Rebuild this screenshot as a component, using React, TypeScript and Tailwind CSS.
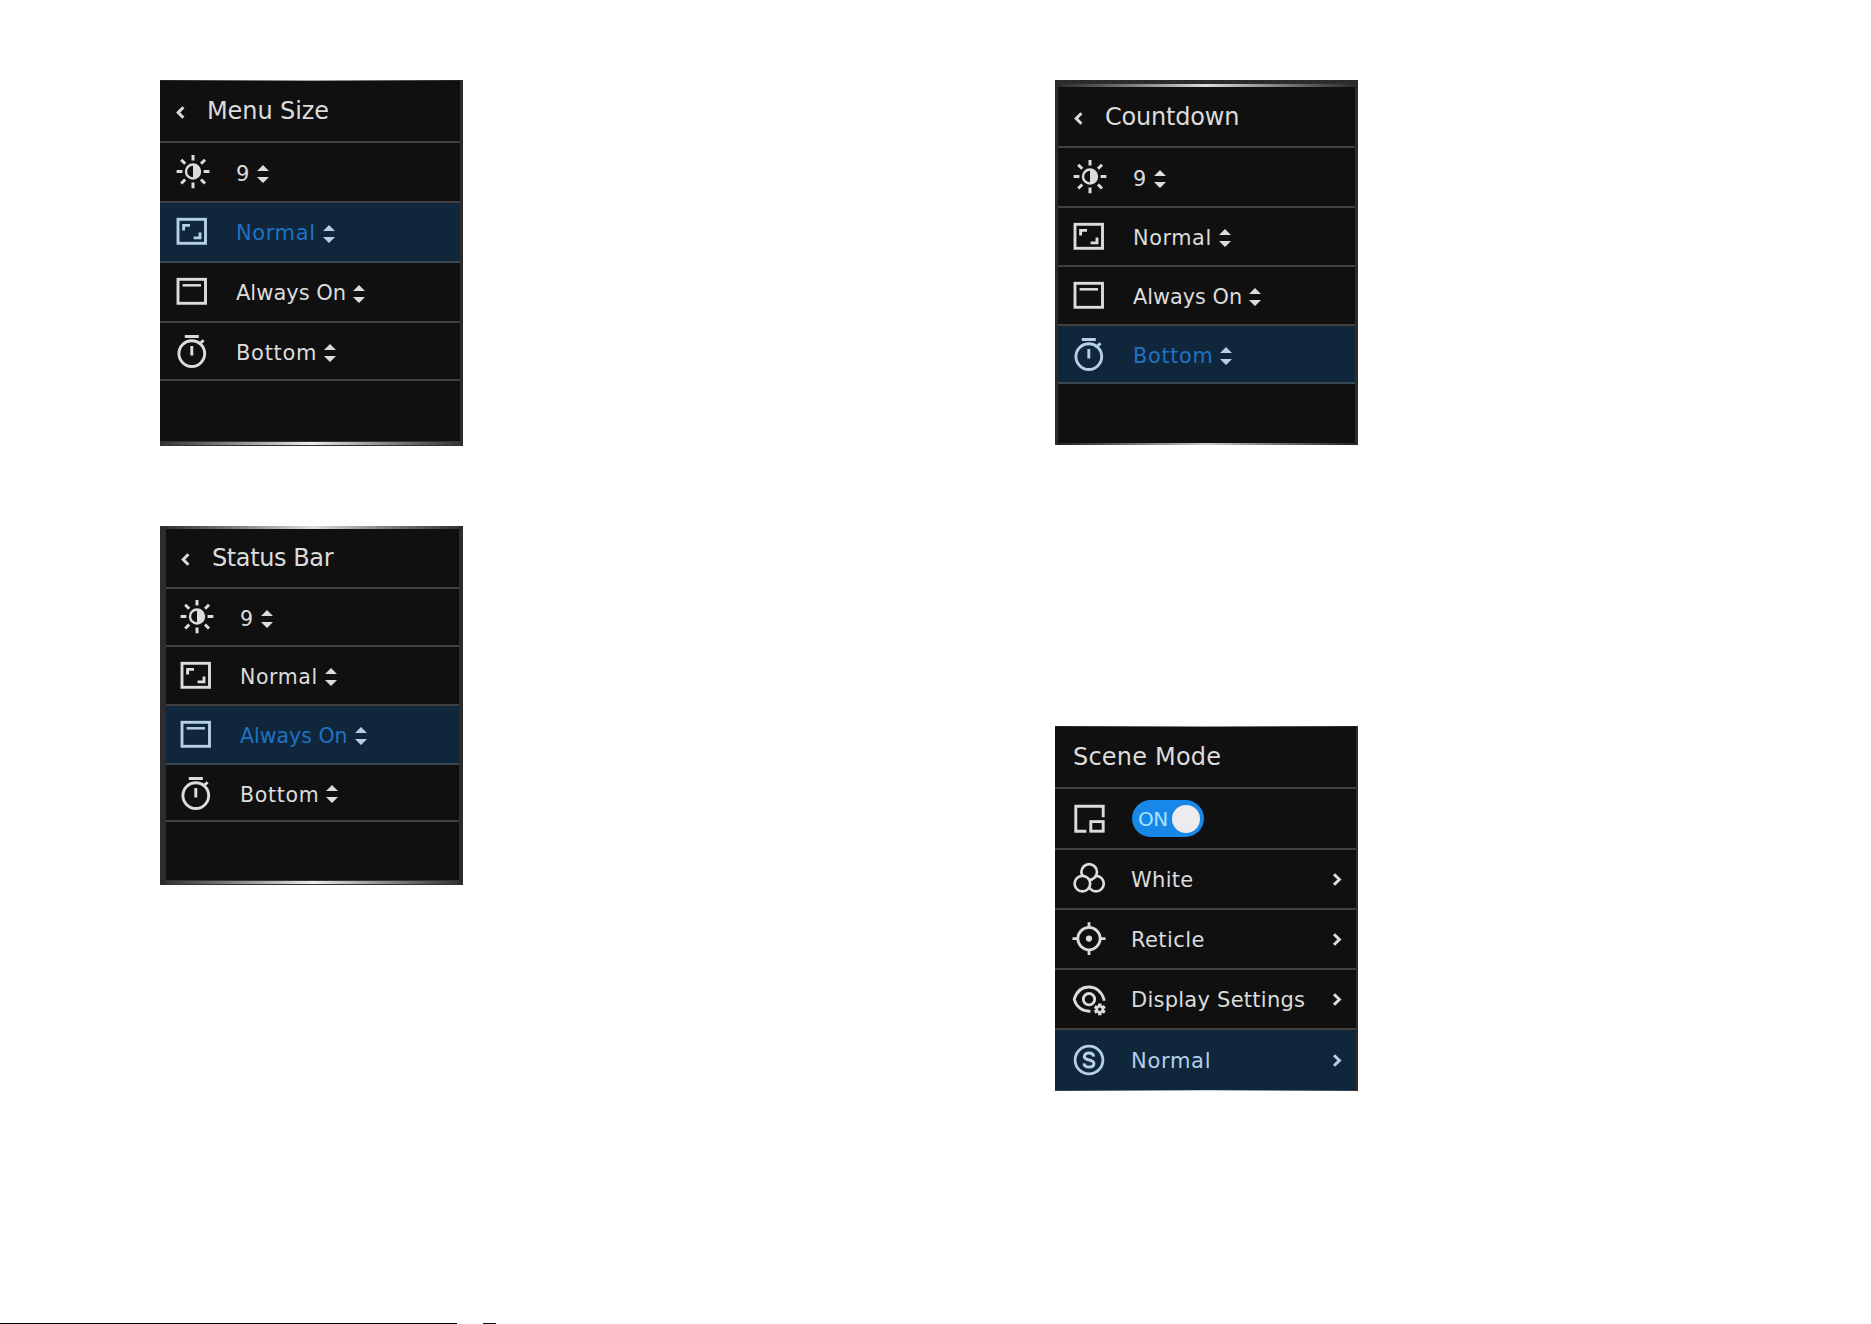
import type { ReactNode } from "react";

const Brightness = () => (
    <svg width="34" height="34" viewBox="0 0 34 34" fill="none" stroke="currentColor" strokeWidth="3">
        <circle cx="17" cy="16.5" r="7" strokeWidth="2.4" />
        <path d="M17 9.5a7 7 0 0 1 0 14z" fill="currentColor" stroke="none" />
        <path d="M17 0v5.6M17 27.6v5.6M.6 16.5h5.8M27.6 16.5h5.8M5.2 4.7l4 4M25 24.5l4 4M5.2 28.5l4-4M25 8.7l4-4" />
    </svg>
);

const MenuSize = () => (
    <svg width="34" height="34" viewBox="0 0 34 34" fill="none" stroke="currentColor" strokeWidth="2.9">
        <rect x="2" y="4.3" width="27.5" height="24" />
        <path d="M7.6 15.6v-5.2h6.4M24 17.5v5.4h-6.4" />
    </svg>
);

const StatusBar = () => (
    <svg width="34" height="34" viewBox="0 0 34 34" fill="none" stroke="currentColor" strokeWidth="2.9">
        <rect x="2" y="4.3" width="27.5" height="24" />
        <path d="M6.6 10.3h18.4" strokeWidth="2.5" />
    </svg>
);

const Countdown = () => (
    <svg width="34" height="34" viewBox="0 0 34 34" fill="none" stroke="currentColor" strokeWidth="2.9">
        <circle cx="15.8" cy="19.6" r="12.9" />
        <path d="M8.8 2.5h14M15.8 12v9.6M23.8 9.8l3.8-3.6" />
    </svg>
);

const Pip = () => (
    <svg width="34" height="34" viewBox="0 0 34 34" fill="none" stroke="currentColor" strokeWidth="2.9">
        <path d="M31.2 15.3V4.2H3.8v25h10.6" />
        <rect x="18.8" y="19.6" width="12.4" height="9.6" />
    </svg>
);

const Palette = () => (
    <svg width="34" height="34" viewBox="0 0 34 34" fill="#101010" stroke="currentColor" strokeWidth="2.7">
        <circle cx="24" cy="21.6" r="7.8" />
        <circle cx="17.2" cy="10" r="7.8" />
        <circle cx="10.4" cy="21.6" r="7.8" />
    </svg>
);

const Reticle = () => (
    <svg width="34" height="34" viewBox="0 0 34 34" fill="none" stroke="currentColor" strokeWidth="2.8">
        <circle cx="17" cy="16.6" r="11.2" />
        <circle cx="17" cy="16.6" r="3.1" fill="currentColor" stroke="none" />
        <path d="M17 .2v6M17 27v6M.5 16.6h6M27.5 16.6h6" />
    </svg>
);

const Display = () => (
    <svg width="34" height="34" viewBox="0 0 34 34" fill="none" stroke="currentColor" strokeWidth="2.8">
        <path d="M18.5 29.2C10 29.8 4.2 24.6 2.2 17.4 4.5 9.6 10 5 17 5s12.7 4.6 15 12.4v1.4" />
        <circle cx="17" cy="17.2" r="5.7" />
        <path d="M27.8 21.4v11.8M22.7 24.4l10.2 5.8M22.7 30.200l10.200-5.800" strokeWidth="3.4" />
        <circle cx="27.8" cy="27.3" r="3" fill="#101010" strokeWidth="2.500" />
    </svg>
);

const Scene = () => (
    <svg width="34" height="34" viewBox="0 0 34 34" fill="none" stroke="currentColor" strokeWidth="2.8">
        <circle cx="17" cy="17" r="13.9" />
        <path d="M21.700 13.600c-.3-2.200-2.100-3.500-4.700-3.500-2.800 0-4.700 1.400-4.700 3.500 0 4.900 9.600 2 9.600 7 0 2.200-2 3.500-4.900 3.500-2.900 0-4.800-1.400-5-3.700" strokeWidth="3" />
    </svg>
);

const UpDown = () => (
    <svg width="12" height="18" viewBox="0 0 12 18" fill="currentColor">
        <path d="M6 0l6 6H0zM0 12h12l-6 6z" />
    </svg>
);

const settings = [
    { icon: <Brightness />, text: "9", label: "pt-[5px] tracking-[0.5px]" },
    { icon: <MenuSize />, text: "Normal", label: "pt-[4px] tracking-[0.6px]" },
    { icon: <StatusBar />, text: "Always On", label: "pt-[4px] tracking-normal" },
    { icon: <Countdown />, text: "Bottom", label: "pt-[6px] tracking-[0.7px]" },
];

const scenes = [
    { icon: <Palette />, text: "White", label: "tracking-[0.3px]" },
    { icon: <Reticle />, text: "Reticle", label: "tracking-[0.4px]" },
    { icon: <Display />, text: "Display Settings", label: "tracking-[0.25px]" },
    { icon: <Scene />, text: "Normal", label: "tracking-[0.7px]" },
];

type MenuProps = {
    title: ReactNode;
    active: number;
    frame: string;
    header: string;
    rows: string[];
    pad: string;
    size: string;
    top: ReactNode;
    bottom: ReactNode;
};

function Menu({ title, active, frame, header, rows, pad, size, top, bottom }: MenuProps) {
    return (
        <div className={`flex flex-col bg-[#101010] border-[#2c2c2c] ${frame}`}>
            {top}
            <div className={`flex shrink-0 items-center border-b-2 border-[#404040] text-2xl ${header}`}>
                <svg className="mt-[3px]" width="9" height="13" viewBox="0 0 9 13" fill="none" stroke="currentColor" strokeWidth="3">
                    <path d="M7.4 1.2L2.2 6.5l5.2 5.3" />
                </svg>
                {title}
            </div>
            {settings.map((row, index) => (
                <div
                    key={row.text}
                    className={`flex shrink-0 items-center border-b-2 ${rows[index]} ${pad} ${index === active ? "bg-[#10263a] border-[#3a4853] text-[#b5cfe8]" : "border-[#404040]"}`}
                >
                    <span className="w-[60px]">{row.icon}</span>
                    <span className={`mr-[7px] ${size} ${row.label} ${index === active ? "text-[#1f72c4]" : ""}`}>{row.text}</span>
                    <span className="pt-[3px]"><UpDown /></span>
                </div>
            ))}
            <div className="grow" />
            {bottom}
        </div>
    );
}

function SceneMenu() {
    return (
        <div className="flex h-[365px] flex-col border-r-2 border-[#2c2c2c] bg-[#101010]">
            <div className="h-px shrink-0 bg-linear-to-r from-[#222] via-[#999] to-[#222]" />
            <div className="flex h-[62px] shrink-0 items-center border-b-2 border-[#404040] pl-[18px] text-2xl tracking-[0.2px]">
                Scene Mode
            </div>
            <div className="flex h-[61px] shrink-0 items-center border-b-2 border-[#404040] pl-[17px]">
                <span className="w-[60px]"><Pip /></span>
                <span className="flex h-[37px] w-[72px] items-center justify-between rounded-full bg-[#1787e8] pr-1 pl-[6px]">
                    <span className="text-[20px] tracking-[-0.5px] text-[#a9e2ff]">ON</span>
                    <span className="size-7 rounded-full bg-[#eeebee]" />
                </span>
            </div>
            {scenes.map((row, index) => (
                <div
                    key={row.text}
                    className={`flex h-[60px] shrink-0 items-center pl-[17px] ${index === 3 ? "bg-[#10263a] text-[#b5cfe8]" : "border-b-2 border-[#404040]"}`}
                >
                    <span className="w-[59px]">{row.icon}</span>
                    <span className={`grow pt-[4px] text-[21px] ${row.label}`}>{row.text}</span>
                    <svg className="mr-[14px]" width="10" height="13" viewBox="0 0 10 13" fill="none" stroke="currentColor" strokeWidth="3">
                        <path d="M2 1.2l5.4 5.3L2 11.8" />
                    </svg>
                </div>
            ))}
            <div className="h-px shrink-0 bg-linear-to-r from-[#2c3a48] via-[#c5d5e5] to-[#2c3a48]" />
        </div>
    );
}

export default function App() {
    return (
        <div className="flex h-[1324px] w-[1871px] flex-col justify-between overflow-hidden bg-white font-['DejaVu_Sans',sans-serif] text-[#dcdcdc]">
            <div className="flex gap-[592px] pt-20 pl-40">
                <div className="flex w-[303px] flex-col gap-20">
                    <Menu
                        title={<span className="ml-[22px] tracking-[-0.1px]">Menu Size</span>}
                        active={1}
                        frame="h-[366px] border-r-3"
                        header="h-[62px] pl-4"
                        rows={["h-[60px]", "h-[60px]", "h-[60px]", "h-[58px]"]}
                        pad="pl-[16px]"
                        size="text-[21px]"
                        top={<div className="h-px shrink-0 bg-linear-to-r from-[#222] via-[#aaa] to-[#222]" />}
                        bottom={<div className="h-[5px] shrink-0 border-y border-[#333] bg-linear-to-r from-[#333] via-[#eee] to-[#333]" />}
                    />
                    <Menu
                        title={<span className="ml-[22px] tracking-[-0.4px]">Status Bar</span>}
                        active={2}
                        frame="h-[359px] border-r-4 border-l-6"
                        header="h-[60px] pl-[15px]"
                        rows={["h-[58px]", "h-[59px]", "h-[59px]", "h-[57px]"]}
                        pad="pl-[14px]"
                        size="text-[20.5px]"
                        top={<div className="h-[3px] shrink-0 bg-linear-to-r from-[#333] via-[#ddd] to-[#333]" />}
                        bottom={<div className="h-[5px] shrink-0 border-y border-[#333] bg-linear-to-r from-[#333] via-[#eee] to-[#333]" />}
                    />
                </div>
                <div className="flex w-[303px] flex-col gap-[281px]">
                    <Menu
                        title={<span className="ml-[22px] tracking-[-0.2px]">Countdown</span>}
                        active={3}
                        frame="h-[365px] border-x-3"
                        header="h-[61px] pl-4"
                        rows={["h-[60px]", "h-[59px]", "h-[59px]", "h-[58px]"]}
                        pad="pl-[15px]"
                        size="text-[20.8px]"
                        top={<div className="h-[7px] shrink-0 border-t-4 border-[#2c2c2c] bg-linear-to-r from-[#2c2c2c] via-[#ddd] to-[#2c2c2c]" />}
                        bottom={<div className="h-[2px] shrink-0 bg-linear-to-r from-[#222] via-[#ccc] to-[#222]" />}
                    />
                    <SceneMenu />
                </div>
            </div>
            <div className="flex gap-[26px]">
                <div className="h-px w-[457px] bg-black" />
                <div className="h-px w-[13px] bg-[#111]" />
            </div>
        </div>
    );
}
